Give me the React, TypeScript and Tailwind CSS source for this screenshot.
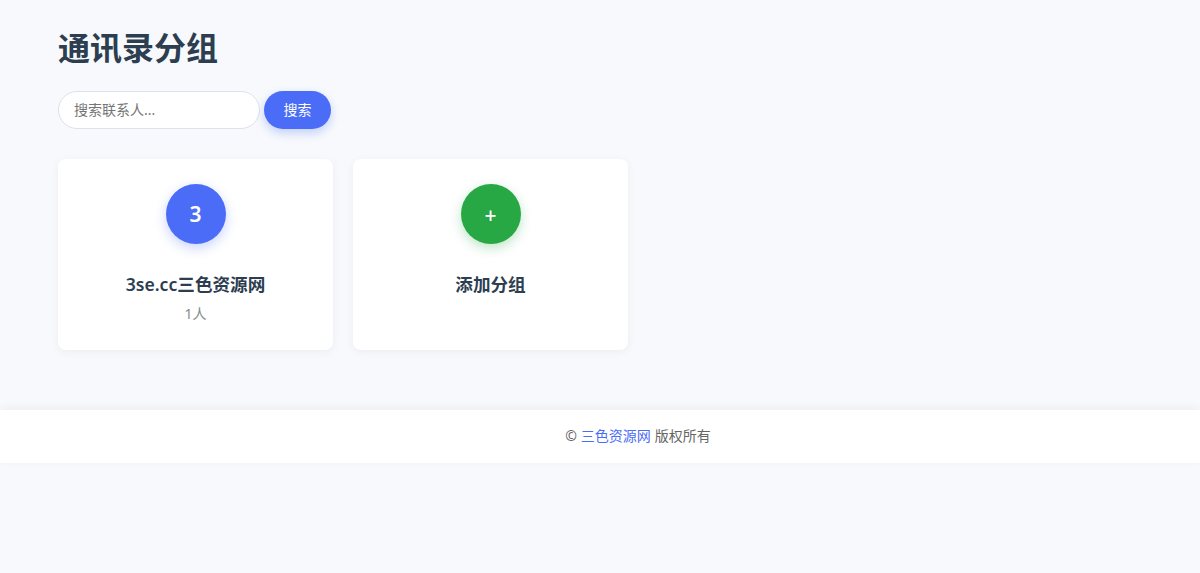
const font = { fontFamily: '"Noto Sans", "Noto Sans CJK SC", sans-serif' };

const groups = [{ id: 1, name: '3se.cc三色资源网', count: 1, initial: '3' }];

export default function App() {
  return (
    <div className="min-h-[573px] bg-[#f7f9fc]" style={font}>
      <main className="px-[58px] pt-[24px] pb-[60px]">
        <h1 className="text-[32px] leading-[48px] font-bold text-[#2c3e50]">通讯录分组</h1>

        {/* search */}
        <div className="mt-[19px] flex items-center gap-[4px]">
          <input
            type="text"
            placeholder="搜索联系人..."
            className="w-[202px] h-[38px] rounded-full border border-[#dde2ea] bg-white px-[15px] pb-[1px] text-[14px] text-[#333] placeholder:text-[#757575] outline-none"
          />
          <button className="w-[67px] h-[38px] pb-[1px] rounded-full bg-[#4a6cf7] text-white text-[14px] shadow-[0_4px_10px_rgba(74,108,247,0.3)]">
            搜索
          </button>
        </div>

        {/* groups */}
        <div className="mt-[30px] flex gap-[20px]">
          {groups.map(g => (
            <div key={g.id} className="w-[275px] h-[191px] bg-white rounded-[8px] shadow-[0_2px_10px_rgba(0,0,0,0.05)] flex flex-col items-center pt-[25px]">
              <div className="w-[60px] h-[60px] rounded-full bg-[#4a6cf7] text-white text-[21px] font-semibold flex items-center justify-center pt-[1px] shadow-[0_4px_12px_rgba(74,108,247,0.3)]">
                {g.initial}
              </div>
              <div className="mt-[26px] text-[17.6px] leading-[28px] font-semibold text-[#2c3e50]">{g.name}</div>
              <div className="mt-[2px] text-[14px] leading-[28px] text-[#7f8c8d]">{g.count}人</div>
            </div>
          ))}
          <div className="w-[275px] h-[191px] bg-white rounded-[8px] shadow-[0_2px_10px_rgba(0,0,0,0.05)] flex flex-col items-center pt-[25px] cursor-pointer">
            <div className="w-[60px] h-[60px] rounded-full bg-[#28a745] text-white text-[21px] font-medium flex items-center justify-center pt-[3px] shadow-[0_4px_12px_rgba(40,167,69,0.3)]">
              +
            </div>
            <div className="mt-[26px] text-[17.6px] leading-[28px] font-semibold text-[#2c3e50]">添加分组</div>
          </div>
        </div>
      </main>

      <footer className="h-[53px] bg-white shadow-[0_-2px_10px_rgba(0,0,0,0.05)] flex items-center justify-center pl-[76px] pb-[2px] text-[14px] text-[#666]">
        © <a href="#" className="mx-[4px] text-[#4a6cf7]">三色资源网</a>版权所有
      </footer>
    </div>
  );
}
